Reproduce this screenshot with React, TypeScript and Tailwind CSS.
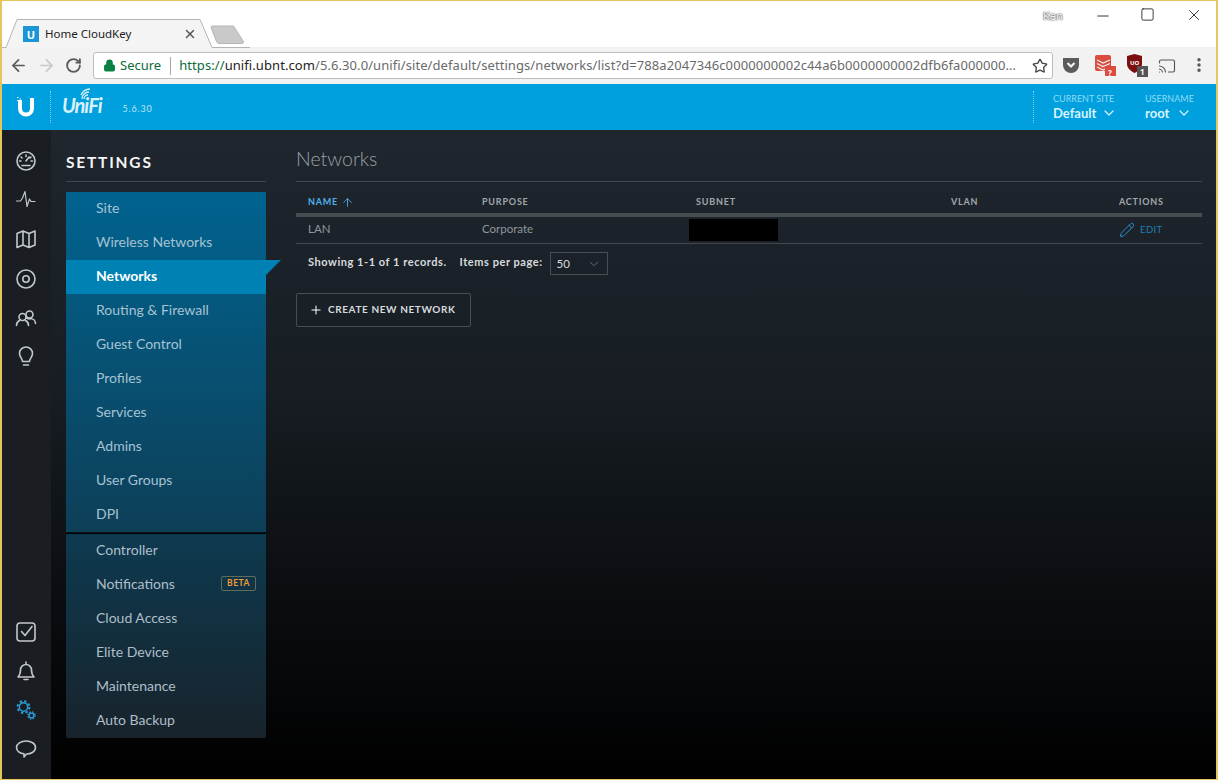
import { ArrowLeft, ArrowRight, RotateCw, Star, Lock, X, Minus, Square, ChevronDown, Plus, Cast, ArrowUp, Pencil, MoreVertical } from "lucide-react";

const lato = "font-['Lato','Liberation_Sans',sans-serif]";

const mainMenu = ["Site", "Wireless Networks", "Networks", "Routing & Firewall", "Guest Control", "Profiles", "Services", "Admins", "User Groups", "DPI"];
const otherMenu = ["Controller", "Notifications", "Cloud Access", "Elite Device", "Maintenance", "Auto Backup"];

function Ic({ children, color = "#c3c8cb" }: { children: React.ReactNode; color?: string }) {
  return (
    <svg width="22" height="22" viewBox="0 0 22 22" fill="none" stroke={color} strokeWidth="1.6" strokeLinecap="round" strokeLinejoin="round">
      {children}
    </svg>
  );
}

const topIcons = [
  <Ic key="dash">
    <circle cx="11" cy="11" r="9" />
    <path d="M11 11l3-4M11 5v1.500M6 7l1 1M16 7l-1 1M4.500 11H6M16 11h1.500M7 15.500h8" />
  </Ic>,
  <Ic key="stats">
    <path d="M1.500 12h4l2-3 2.500-6.500 2 15 2.500-7.500 1.500 2.500h4" strokeWidth="1.2" />
  </Ic>,
  <Ic key="map">
    <path d="M2 5.500l6-2.500 6 2.500 6-2.500v14l-6 2.500-6-2.500-6 2.500zM8 3v14M14 5.500v14" />
  </Ic>,
  <Ic key="devices">
    <circle cx="11" cy="11" r="9" />
    <circle cx="11" cy="11" r="3.200" />
  </Ic>,
  <Ic key="clients">
    <circle cx="7.500" cy="10" r="3.500" />
    <circle cx="14.500" cy="7.500" r="3.500" />
    <path d="M1.500 18.500c0-2 1-4 3-5M10.500 13.500c2 1 3 3 3 5M11.500 11c2 1 2.500 1.500 3.500 0.500 3 0 5.500 2 5.500 5" />
  </Ic>,
  <Ic key="insights">
    <path d="M7.500 15.500c0-3-3-4.500-3-8a6.500 6.500 0 0113 0c0 3.500-3 5-3 8zM8.500 19h5" />
  </Ic>,
];

const bottomIcons = [
  <Ic key="alerts">
    <rect x="2" y="2" width="18" height="18" rx="3" />
    <path d="M6.500 10.500l3.500 4 7-9" />
  </Ic>,
  <Ic key="events">
    <path d="M3 17c2-2 2.500-4 2.500-7a5.500 5.500 0 0111 0c0 3 .5 5 2.500 7zM9 19.500h4M11 2v2" />
  </Ic>,
  <Ic key="settings" color="#2a9fd8">
    <circle cx="8.500" cy="8" r="4.200" strokeWidth="1.500" />
    <circle cx="8.500" cy="8" r="6" strokeWidth="1.800" strokeDasharray="2.400 2.310" strokeLinecap="butt" />
    <circle cx="16.500" cy="16.500" r="2.300" strokeWidth="1.300" />
    <circle cx="16.500" cy="16.500" r="3.600" strokeWidth="1.400" strokeDasharray="1.600 1.230" strokeLinecap="butt" />
  </Ic>,
  <Ic key="support">
    <path d="M11 3c5 0 9.500 2.500 9.500 6.500S16 16 11.500 16l-2.500 3v-3.200C5 15.500 1.500 13 1.500 9.500S6 3 11 3z" />
  </Ic>,
];

function ChromeBar() {
  return (
    <div className="font-['Noto_Sans','Open_Sans',sans-serif]">
      {/* title strip with tabs */}
      <div className="relative h-[46px] bg-white">
        <svg className="absolute left-[-2px] top-[-1px]" width="250" height="48" viewBox="0 0 250 48" fill="none">
          <path d="M0 47.500h6L17 19.500h183l12 28h1000" fill="#f4f4f4" stroke="#b4b4b4" />
          <path d="M211 27.500a1.500 1.500 0 011.500-1.500h21l10 15.500a1.500 1.500 0 01-1.500 2h-23a3 3 0 01-2.500-2z" fill="#c9c9c9" stroke="#b5b5b5" />
        </svg>
        <div className="absolute left-[21px] top-[25px] flex h-4 w-4 items-center justify-center bg-[#1b95d5]">
          <span className="text-[11px] font-bold leading-none text-white">U</span>
        </div>
        <span className="absolute left-[43px] top-[23px] text-[11.500px] leading-[20px] text-[#222]">Home CloudKey</span>
        <X className="absolute left-[181px] top-[26px] h-[14px] w-[14px] text-[#555]" strokeWidth={2.500} />
        <span className="absolute left-[1041px] top-[8px] text-[11px] leading-[14px] text-white [text-shadow:0_0_2px_#333,0_0_1px_#333]">Ken</span>
        <Minus className="absolute left-[1092px] top-[6px] h-[18px] w-[18px] text-[#222]" strokeWidth={1.200} />
        <Square className="absolute left-[1138px] top-[6px] h-[15px] w-[15px] text-[#222]" strokeWidth={1.400} />
        <X className="absolute left-[1183px] top-[5px] h-[18px] w-[18px] text-[#222]" strokeWidth={1.200} />
      </div>

      {/* toolbar */}
      <div className="flex h-[37px] items-center bg-[#f2f2f2] pl-[7px]">
        <div className="flex w-[84px] shrink-0 items-center gap-[9px]">
          <ArrowLeft className="h-[19px] w-[19px] text-[#5a5a5a]" strokeWidth={2.200} />
          <ArrowRight className="h-[19px] w-[19px] text-[#c8c8c8]" strokeWidth={2.200} />
          <RotateCw className="h-[17px] w-[17px] text-[#5a5a5a]" strokeWidth={2.600} />
        </div>
        <div className="flex h-[27px] w-[960px] shrink-0 items-center rounded-[3px] border border-[#bdbdbd] bg-white pl-[9px] pr-[4px]">
          <Lock className="mr-[4px] h-[13px] w-[13px] fill-[#0b8043] text-[#0b8043]" strokeWidth={2} />
          <span className="text-[13px] leading-none text-[#0b6b3a]">Secure</span>
          <span className="ml-[9px] mr-[8px] h-[18px] w-px bg-[#a8a8a8]" />
          <span className="flex-1 whitespace-nowrap text-[13px] leading-none tracking-[0.080px] text-[#6a6a6a]">
            <span className="text-[#0b6b3a]">https://</span>
            <span className="text-[#222]">unifi.ubnt.com</span>
            /5.6.30.0/unifi/site/default/settings/networks/list?d=788a2047346c0000000002c44a6b0000000002dfb6fa000000...
          </span>
          <Star className="ml-[8px] h-[16px] w-[16px] shrink-0 text-[#444]" strokeWidth={2} />
        </div>
        <div className="relative h-full flex-1">
          <svg className="absolute left-[9px] top-[10px]" width="18" height="17" viewBox="0 0 18 17">
            <path d="M1 1h16v7a8 8 0 01-16 0z" fill="#5b5b5b" />
            <path d="M5.500 6L9 9.500 12.500 6" stroke="#f2f2f2" strokeWidth="2.200" fill="none" />
          </svg>
          <svg className="absolute left-[41px] top-[6px]" width="24" height="24" viewBox="0 0 24 24">
            <rect x="1" y="2" width="16" height="16" rx="2" fill="#db4c3f" />
            <path d="M3 7l6 3 7-3M3 10.500l6 3 7-3M3 14l6 3 7-3" stroke="#f2f2f2" strokeWidth="1.300" fill="none" />
            <rect x="11" y="13" width="11" height="10" fill="#db4c3f" />
          </svg>
          <span className="absolute left-[55px] top-[22px] text-[8px] font-bold leading-none text-white">?</span>
          <svg className="absolute left-[73px] top-[6px]" width="24" height="24" viewBox="0 0 24 24">
            <path d="M1 3l7.500-2L16 3v8c0 4-3.500 7-7.500 9C4.500 18 1 15 1 11z" fill="#7d0f0f" />
            <rect x="11" y="13" width="11" height="11" fill="#555" />
          </svg>
          <span className="absolute left-[77px] top-[13px] text-[6px] font-bold leading-none text-white">UO</span>
          <span className="absolute left-[87px] top-[21px] text-[8px] font-bold leading-none text-white">1</span>
          <Cast className="absolute left-[105px] top-[10px] h-[18px] w-[18px] text-[#555]" strokeWidth={1.500} />
          <MoreVertical className="absolute left-[137px] top-[9px] h-[18px] w-[18px] text-[#555]" strokeWidth={2.600} />
        </div>
      </div>
    </div>
  );
}

function Header() {
  return (
    <div className={`flex h-[46px] items-center bg-[#009fdd] text-white ${lato}`}>
      <div className="flex w-[48px] shrink-0 items-center justify-center">
        <svg width="20" height="22" viewBox="0 0 20 22" fill="none">
          <path d="M4 4v8.500a6 6 0 0012 0V2" stroke="#fff" strokeWidth="4" />
          <path d="M1 1.500h1.500M1 4.500h1.500M3.500 3h1.500M3.500 6h1.500" stroke="#e8f7fd" strokeWidth="1.200" />
        </svg>
      </div>
      <div className="h-[32px] w-px border-l border-dotted border-[#7fd0ee]" />
      <div className="relative ml-[11px]">
        <span className="text-[20px] font-bold italic leading-none tracking-[-1px] text-[#d9f1fa]">UniFi</span>
        <svg className="absolute left-[18px] top-[-7px]" width="16" height="12" viewBox="0 0 16 12" fill="none" stroke="#d9f1fa" strokeWidth="1.300">
          <path d="M2 11a7 7 0 017-7M1 7a10 10 0 019-6M4 11a4 4 0 014-4" />
        </svg>
      </div>
      <span className="ml-[21px] pt-[3px] text-[9px] tracking-[0.800px] text-[#bfe6f6]">5.6.30</span>
      <div className="ml-auto flex items-center">
        <div className="mr-[19px] h-[32px] w-px border-l border-dotted border-[#7fd0ee]" />
        <div className="w-[92px]">
          <div className="text-[9px] leading-[12px] text-[#8fdcf7]">CURRENT SITE</div>
          <div className="flex items-center text-[13px] font-bold leading-[17px] text-[#d9f4fd]">
            Default
            <ChevronDown className="ml-[5px] h-[16px] w-[16px]" strokeWidth={1.800} />
          </div>
        </div>
        <div className="w-[71px]">
          <div className="text-[9px] leading-[12px] text-[#8fdcf7]">USERNAME</div>
          <div className="flex items-center text-[13px] font-bold leading-[17px] text-[#d9f4fd]">
            root
            <ChevronDown className="ml-[7px] h-[16px] w-[16px]" strokeWidth={1.800} />
          </div>
        </div>
      </div>
    </div>
  );
}

function Sidebar() {
  return (
    <div className="flex w-[49px] shrink-0 flex-col items-center justify-between bg-[#1a1d21] pb-[19px] pr-[1px] pt-[20px]">
      <div className="flex flex-col gap-[17.200px]">{topIcons}</div>
      <div className="flex flex-col gap-[17px]">{bottomIcons}</div>
    </div>
  );
}

function SettingsMenu() {
  return (
    <div className="w-[200px] shrink-0">
      <h2 className="flex h-[32px] items-center border-b border-[#42484e] pb-[6px] text-[15.500px] font-bold leading-none tracking-[1.800px] text-[#f2f4f5]">
        SETTINGS
      </h2>
      <div className="mt-[10px] bg-[linear-gradient(180deg,#00638f_0%,#0e3f58_100%)] pb-0">
        {mainMenu.map((m) =>
          m === "Networks" ? (
            <div key={m} className="relative flex h-[34px] items-center bg-[#0081b4] pb-[3px] pl-[30px] text-[14px] font-bold text-white">
              {m}
              <svg className="absolute left-[200px] top-0" width="15" height="15" viewBox="0 0 15 15">
                <path d="M0 0h15L0 15z" fill="#0081b4" />
              </svg>
            </div>
          ) : (
            <div key={m} className="flex h-[34px] items-center pb-[3px] pl-[30px] text-[14px] text-[#a5c3d3]">
              {m}
            </div>
          )
        )}
      </div>
      <div className="mt-[1px] rounded-b-[2px] border-t border-black bg-[linear-gradient(180deg,#0d3a50_0%,#18232b_100%)]">
        {otherMenu.map((m) => (
          <div key={m} className="flex h-[34px] items-center justify-between pb-[3px] pl-[30px] pr-[10px] text-[14px] text-[#aebfc9]">
            {m}
            {m === "Notifications" && (
              <span className="rounded-[2px] border border-[#5f6d5a] px-[5px] text-[8.500px] font-bold leading-[13px] tracking-[0.500px] text-[#f09a35]">
                BETA
              </span>
            )}
          </div>
        ))}
      </div>
    </div>
  );
}

function Networks() {
  return (
    <div className="min-w-0 flex-1 pr-[14px]">
      <h1 className="flex h-[32px] items-center border-b border-[#42484e] pb-[13px] text-[19.500px] font-light leading-none text-[#9aa1a6]">Networks</h1>
      <div className="grid h-[35px] grid-cols-[174px_214px_255px_168px_1fr] items-center border-b-[4px] border-[#474d50] pl-[12px] pt-[9px] text-[9px] font-bold tracking-[0.800px] text-[#a0a7ab]">
        <span className="flex items-center text-[#4fb0ea]">
          NAME
          <ArrowUp className="ml-[3px] h-[13px] w-[13px]" strokeWidth={1.600} />
        </span>
        <span>PURPOSE</span>
        <span>SUBNET</span>
        <span>VLAN</span>
        <span>ACTIONS</span>
      </div>
      <div className="grid h-[27px] grid-cols-[174px_214px_255px_168px_1fr] items-center border-b border-[#42484e] pl-[12px] text-[11.500px] text-[#8f979c]">
        <span className="pb-[2px]">LAN</span>
        <span className="pb-[2px]">Corporate</span>
        <span className="-ml-[7px] h-[22px] w-[89px] bg-black" />
        <span />
        <span className="flex items-center text-[9.500px] tracking-[0.400px] text-[#1c7fb4]">
          <Pencil className="mr-[5px] h-[16px] w-[16px] text-[#2b8fc9]" strokeWidth={1.500} />
          EDIT
        </span>
      </div>
      <div className="mt-[8px] flex items-center pl-[12px] text-[11px] font-bold tracking-[0.550px] text-[#d8dcde]">
        <span className="pb-[2px]">Showing 1-1 of 1 records.</span>
        <span className="ml-[13px] pb-[2px]">Items per page:</span>
        <div className="ml-[7px] flex h-[23px] w-[58px] items-center justify-between border border-[#484e53] pl-[6px] pr-[6px] text-[11.500px] font-normal tracking-normal">
          50
          <ChevronDown className="h-[14px] w-[14px] text-[#9aa1a6]" strokeWidth={1} />
        </div>
      </div>
      <button className="mt-[18px] flex h-[34px] w-[175px] items-center rounded-[2px] border border-[#484e53] pl-[12px] text-[10px] font-bold tracking-[0.600px] text-[#d8dcde]">
        <Plus className="mr-[5px] h-[14px] w-[14px] text-white" strokeWidth={1.800} />
        <span className="pb-[2px]">CREATE NEW NETWORK</span>
      </button>
    </div>
  );
}

export default function App() {
  return (
    <div className="flex h-[780px] w-[1218px] flex-col overflow-hidden border-x-2 border-t border-b border-x-[#e6c55a] border-y-[#e6c55a]">
      <ChromeBar />
      <Header />
      <div className={`flex min-h-0 flex-1 bg-[linear-gradient(180deg,#1f262e_0%,#171d23_40%,#000_100%)] ${lato}`}>
        <Sidebar />
        <div className="flex min-w-0 flex-1 gap-[30px] pl-[15px] pt-[20px]">
          <SettingsMenu />
          <Networks />
        </div>
      </div>
    </div>
  );
}
